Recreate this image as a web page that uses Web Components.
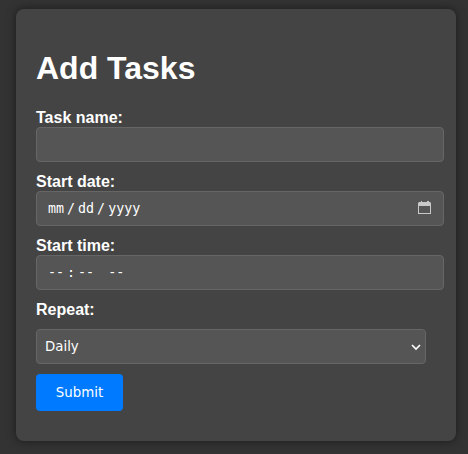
<!DOCTYPE html>
<html lang="en"><head><meta charset="utf-8"><title>Add Tasks</title>
<style>
html,body{margin:0;height:100%}
body{background:#333;color:#fff;font-family:"Liberation Sans",Arial,sans-serif;overflow:hidden}
</style></head><body>
<task-card heading="Add Tasks">
<task-field label="Task name:"></task-field>
<task-field label="Start date:"><date-parts><span>mm</span><i>/</i><span>dd</span><i>/</i><span>yyyy</span></date-parts><calendar-icon></calendar-icon></task-field>
<task-field label="Start time:"><date-parts><span>--</span><i>:</i><span>--</span><i>&nbsp;</i><span>--</span></date-parts></task-field>
<task-repeat label="Repeat:" value="Daily"></task-repeat>
<task-submit>Submit</task-submit>
</task-card>
<script>
customElements.define('task-card', class extends HTMLElement{
  constructor(){super();this.attachShadow({mode:'open'}).innerHTML=`<style>
  :host{display:block;box-sizing:border-box;padding-top:9px;padding-left:16px}
  section{box-sizing:border-box;width:440px;height:432px;padding:20px;background:#444;border-radius:8px;box-shadow:0 0 10px rgba(0,0,0,.5)}
  h1{margin:21px 0 23px;font-size:32px;line-height:36px}
  </style><section><h1></h1><slot></slot></section>`;}
  connectedCallback(){this.shadowRoot.querySelector('h1').textContent=this.getAttribute('heading');}
});
customElements.define('task-field', class extends HTMLElement{
  constructor(){super();this.attachShadow({mode:'open'}).innerHTML=`<style>
  :host{display:block;margin-bottom:11px}
  label{display:block;font-weight:bold;font-size:16px;line-height:18px}
  div{display:flex;align-items:center;justify-content:space-between;box-sizing:border-box;width:408px;height:35px;padding:0 12px 0 11px;border:1px solid #666;border-radius:4px;background:#555;color:#fff}
  </style><label></label><div role="textbox" tabindex="0"><slot></slot></div>`;}
  connectedCallback(){this.shadowRoot.querySelector('label').textContent=this.getAttribute('label');}
});
customElements.define('date-parts', class extends HTMLElement{
  constructor(){super();this.attachShadow({mode:'open'}).innerHTML=`<style>
  :host{display:flex;font:13.333px/16px "DejaVu Sans Mono",monospace}
  ::slotted(i){font-style:normal;width:14px;text-align:center}
  </style><slot></slot>`;}
});
customElements.define('calendar-icon', class extends HTMLElement{
  constructor(){super();this.attachShadow({mode:'open'}).innerHTML=`<style>
  :host{display:block;width:13px;height:13px;margin-bottom:2px}svg{display:block}
  </style><svg width="13" height="13" viewBox="0 0 13 13" fill="#c8c8c8"><path fill-rule="evenodd" d="M1 1h2V0h1v1h5V0h2v1h1l1 1v11H0V2zM1 5v7h11V5z"/></svg>`;}
});
customElements.define('task-repeat', class extends HTMLElement{
  constructor(){super();this.attachShadow({mode:'open'}).innerHTML=`<style>
  :host{display:block;margin-bottom:10px}
  label{display:block;font-weight:bold;font-size:16px;line-height:18px;margin-bottom:10px}
  div{display:grid;width:390px;align-items:center}
  select,svg{grid-area:1/1}
  svg{justify-self:end;margin-right:5px;pointer-events:none}
  select{appearance:none;box-sizing:border-box;width:390px;height:35px;padding:0 8px;margin:0;border:1px solid #666;border-radius:4px;background:#555;color:#fff;font:13.333px "DejaVu Sans",sans-serif}
  </style><label for="s"></label><div><select id="s"></select><svg width="10" height="8" viewBox="0 0 10 8" fill="none" stroke="#fff" stroke-width="1.7"><path d="M1 2l4 4 4-4"/></svg></div>`;}
  connectedCallback(){const r=this.shadowRoot;r.querySelector('label').textContent=this.getAttribute('label');const o=document.createElement('option');o.textContent=this.getAttribute('value');r.querySelector('select').append(o);}
});
customElements.define('task-submit', class extends HTMLElement{
  constructor(){super();this.attachShadow({mode:'open'}).innerHTML=`<style>
  :host{display:block}
  button{display:block;box-sizing:border-box;width:87px;height:37px;padding:0 0 1px;border:0;border-radius:4px;background:#007bff;color:#fff;font:13.333px "DejaVu Sans",sans-serif}
  </style><button><slot></slot></button>`;}
});
</script></body></html>
